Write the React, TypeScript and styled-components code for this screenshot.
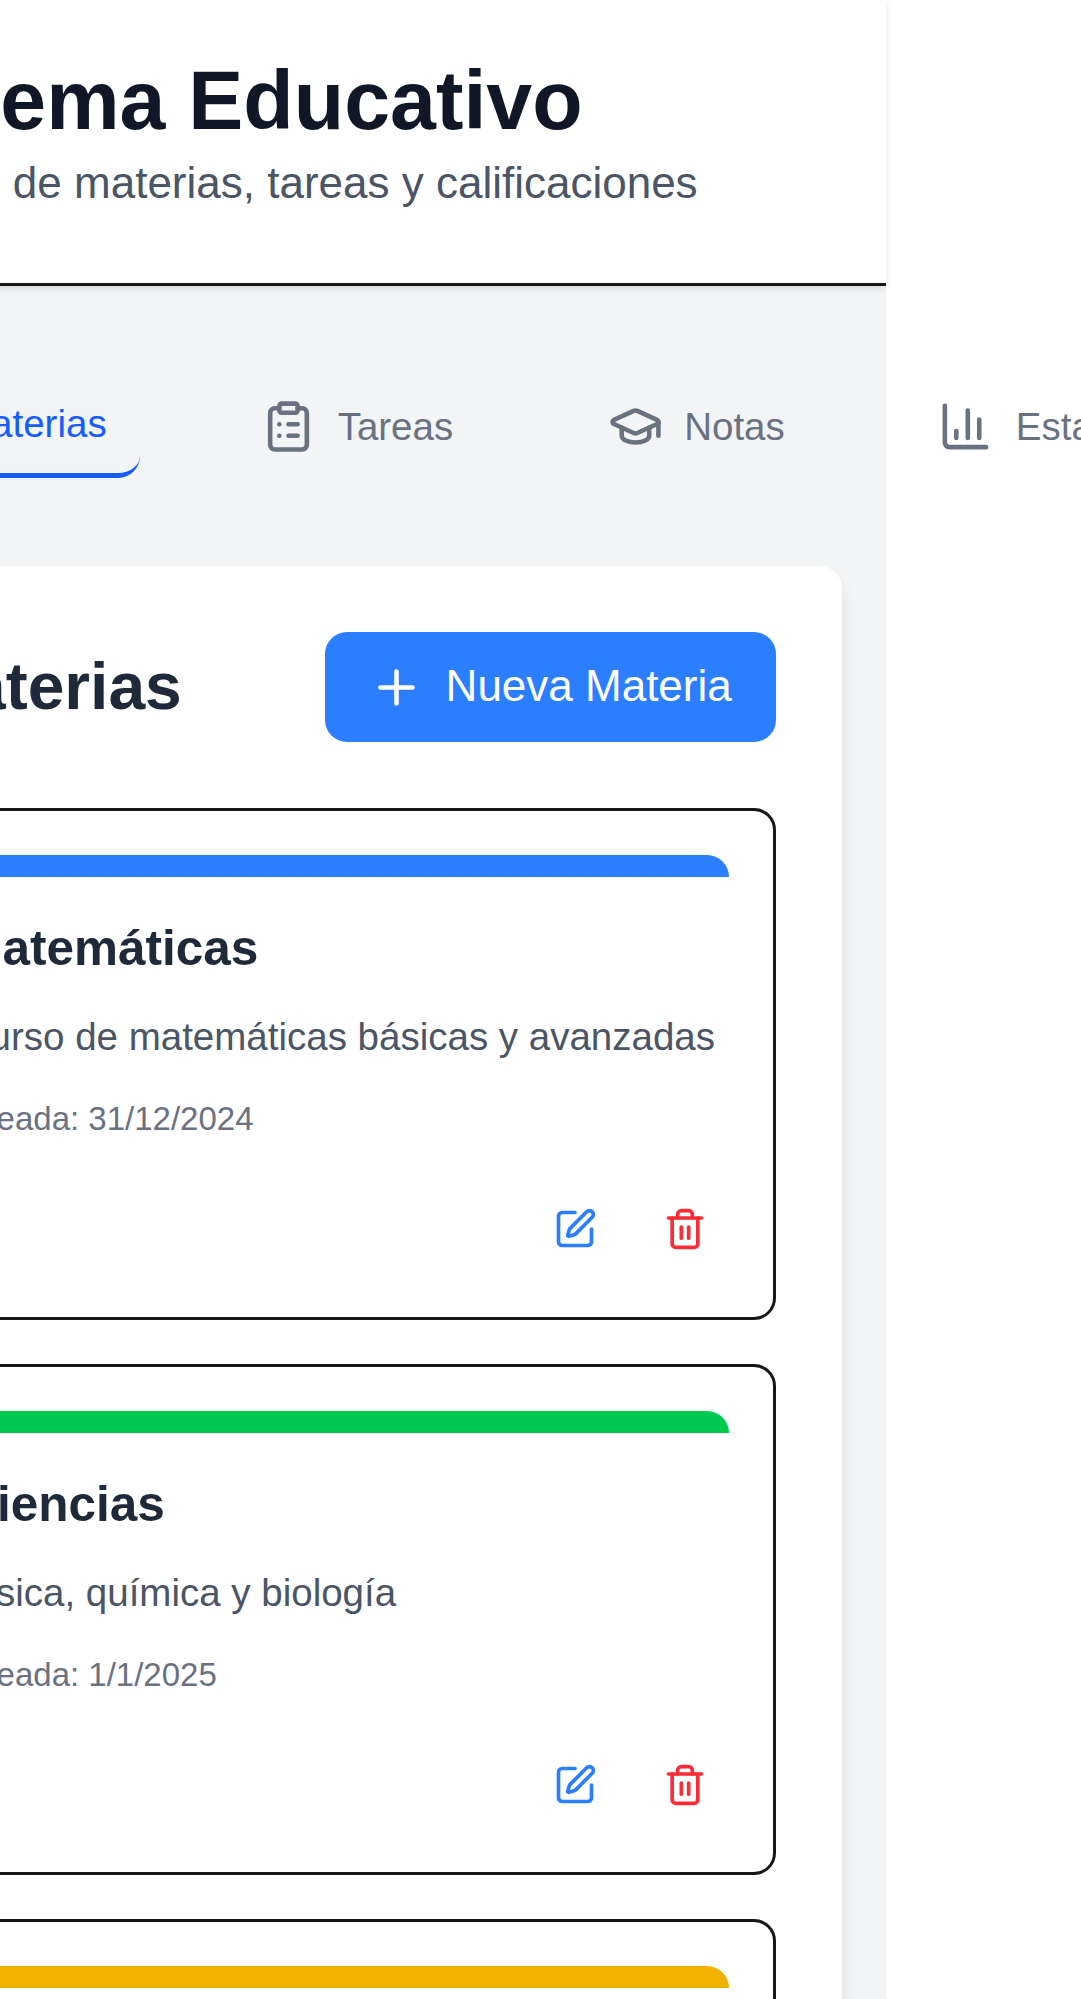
import React from "react";
import styled, { createGlobalStyle } from "styled-components";
import {
  BookOpen,
  ChartColumn,
  ClipboardList,
  GraduationCap,
  Plus,
  SquarePen,
  Trash2,
} from "lucide-react";

const GlobalStyle = createGlobalStyle`
  *, *::before, *::after { box-sizing: border-box; }
  html { font-size: 44px; }
  body {
    margin: 0;
    background: #fff;
    font-family: "Liberation Sans", Arial, Helvetica, sans-serif;
  }
  h1, h2, h3, p { margin: 0; }
  svg { display: block; flex-shrink: 0; }
`;

/* Window onto the page, which is panned to the right */
const Viewport = styled.div`
  width: 1081px;
  height: 1999px;
  overflow: hidden;
  background: #fff;
`;

const Page = styled.div`
  width: 1080.75px;
  min-height: 100%;
  margin-left: -195px;
  background: #f3f4f6;
`;

const Header = styled.header`
  padding: 50.5px 1rem 67.5px;
  background: #fff;
  border-bottom: 3px solid #171717;
  box-shadow: 0 2.75px 8.25px 0 rgba(0, 0, 0, 0.1),
    0 2.75px 5.5px -2.75px rgba(0, 0, 0, 0.1);
`;

const Title = styled.h1`
  color: #101828;
  font-size: 1.875rem;
  line-height: 2.25rem;
  font-weight: 700;
  white-space: nowrap;
`;

const Subtitle = styled.p`
  color: #4a5565;
  font-size: 1rem;
  line-height: 1.5rem;
  white-space: nowrap;
`;

const Main = styled.main`
  padding: 87.75px 1rem 2rem;
`;

const Tabs = styled.nav`
  display: flex;
  gap: 2rem;
  margin-bottom: 2rem;
`;

const Tab = styled.button<{ $active?: boolean; $iconShift?: number }>`
  display: flex;
  flex-shrink: 0;
  align-items: center;
  gap: 0.5rem;
  padding: 0.5rem 0.75rem;
  padding-bottom: ${(p) => (p.$active ? "22.5px" : "0.5rem")};
  border: 0 solid #155dfc;
  border-bottom-width: ${(p) => (p.$active ? "5px" : "0")};
  border-radius: 0.5rem;
  background: transparent;
  color: ${(p) => (p.$active ? "#155dfc" : "#6a7282")};
  font-family: inherit;
  font-size: 0.875rem;
  line-height: 1.25rem;
  white-space: nowrap;

  svg {
    margin-left: ${(p) => p.$iconShift ?? 0}px;
    margin-right: ${(p) => -(p.$iconShift ?? 0)}px;
  }
`;

const Panel = styled.section`
  padding: 1.5rem;
  border-radius: 0.5rem;
  background: #fff;
  box-shadow: 0 11px 16.5px -2.75px rgba(0, 0, 0, 0.1),
    0 5.5px 11px -5.5px rgba(0, 0, 0, 0.1);
`;

const PanelHeader = styled.div`
  display: flex;
  align-items: center;
  justify-content: space-between;
  margin-bottom: 1.5rem;
`;

const PanelTitle = styled.h2`
  margin-left: -1px;
  padding-bottom: 2px;
  color: #1e2939;
  font-size: 1.5rem;
  line-height: 2rem;
  font-weight: 700;
`;

const AddButton = styled.button`
  display: flex;
  align-items: center;
  gap: 0.5rem;
  padding: 0.5rem 1rem;
  border: 0;
  border-radius: 0.5rem;
  background: #2b7fff;
  color: #fff;
  font-family: inherit;
  font-size: 1rem;
  line-height: 1.5rem;
  white-space: nowrap;
`;

const AddLabel = styled.span`
  margin: -1px 0 1px;
`;

const CardList = styled.div`
  display: grid;
  gap: 1rem;
`;

const Card = styled.article`
  min-height: 511.5px;
  padding: 43.75px;
  border: 3px solid #171717;
  border-radius: 0.5rem;
`;

const Stripe = styled.div<{ $color: string }>`
  height: 0.5rem;
  margin-bottom: 32px;
  border-radius: 0.5rem 0.5rem 0 0;
  background: ${(p) => p.$color};
`;

const CardTitle = styled.h3`
  margin-bottom: 23px;
  margin-left: -0.5px;
  color: #1e2939;
  font-size: 1.125rem;
  line-height: 1.75rem;
  font-weight: 600;
`;

const Description = styled.p`
  margin-bottom: 0.75rem;
  color: #4a5565;
  font-size: 0.875rem;
  line-height: 1.25rem;
  white-space: nowrap;
`;

const Created = styled.p`
  color: #6a7282;
  font-size: 0.75rem;
  line-height: 1rem;
`;

const Actions = styled.div`
  display: flex;
  justify-content: flex-end;
  gap: 0.5rem;
  margin-top: 1rem;
`;

const IconButton = styled.button<{ $color: string }>`
  padding: 0.5rem;
  border: 0;
  background: transparent;
  color: ${(p) => p.$color};
`;

interface Subject {
  color: string;
  name?: string;
  description?: string;
  created?: string;
}

const subjects: Subject[] = [
  {
    color: "#2b7fff",
    name: "Matemáticas",
    description: "Curso de matemáticas básicas y avanzadas",
    created: "31/12/2024",
  },
  {
    color: "#00c950",
    name: "Ciencias",
    description: "Física, química y biología",
    created: "1/1/2025",
  },
  { color: "#f0b100" },
];

const SubjectCard = ({ color, name, description, created }: Subject) => (
  <Card>
    <Stripe $color={color} />
    {name && (
      <>
        <CardTitle>{name}</CardTitle>
        <Description>{description}</Description>
        <Created>Creada: {created}</Created>
        <Actions>
          <IconButton $color="#2b7fff" aria-label="Editar">
            <SquarePen size={44} />
          </IconButton>
          <IconButton $color="#fb2c36" aria-label="Eliminar">
            <Trash2 size={44} />
          </IconButton>
        </Actions>
      </>
    )}
  </Card>
);

export default function App() {
  return (
    <>
      <GlobalStyle />
      <Viewport>
        <Page>
          <Header>
            <Title>Sistema Educativo</Title>
            <Subtitle>Gestión de materias, tareas y calificaciones</Subtitle>
          </Header>
          <Main>
            <Tabs>
              <Tab $active>
                <BookOpen size={55} />
                Materias
              </Tab>
              <Tab>
                <ClipboardList size={55} />
                Tareas
              </Tab>
              <Tab $iconShift={1}>
                <GraduationCap size={55} />
                Notas
              </Tab>
              <Tab $iconShift={-1}>
                <ChartColumn size={55} />
                Estadísticas
              </Tab>
            </Tabs>
            <Panel>
              <PanelHeader>
                <PanelTitle>Materias</PanelTitle>
                <AddButton>
                  <Plus size={55} />
                  <AddLabel>Nueva Materia</AddLabel>
                </AddButton>
              </PanelHeader>
              <CardList>
                {subjects.map((subject) => (
                  <SubjectCard key={subject.color} {...subject} />
                ))}
              </CardList>
            </Panel>
          </Main>
        </Page>
      </Viewport>
    </>
  );
}
